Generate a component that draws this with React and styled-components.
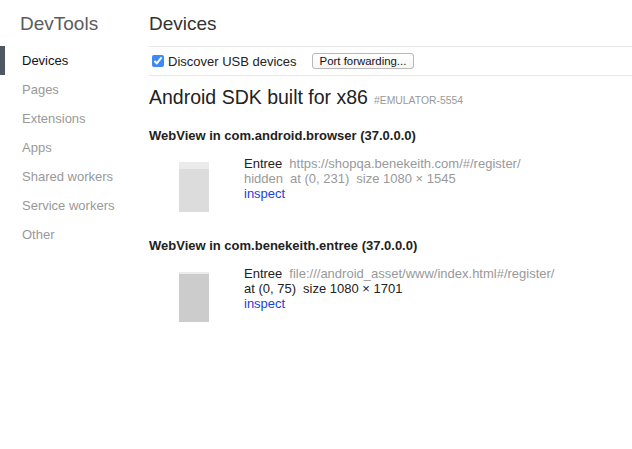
import React from "react";
import styled, { createGlobalStyle } from "styled-components";

const GlobalStyle = createGlobalStyle`
  html, body { margin: 0; padding: 0; background: #fff; }
  body {
    font-family: "Liberation Sans", Arial, Helvetica, sans-serif;
    font-size: 13px;
    color: #222;
  }
`;

const Layout = styled.div`
  display: flex;
  width: 632px;
  min-height: 449px;
`;

const Sidebar = styled.nav`
  width: 149px;
  flex-shrink: 0;
`;

const Brand = styled.h1`
  margin: 0;
  padding: 13px 0 11px 20px;
  font-size: 19px;
  line-height: 22px;
  font-weight: normal;
  color: #5c5c5c;
`;

const NavList = styled.ul`
  list-style: none;
  margin: 0;
  padding: 0;
`;

const NavItem = styled.li`
  position: relative;
  height: 29px;
  line-height: 29px;
  padding-left: 22px;
  font-size: 13px;
  color: ${(p) => (p.$active ? "#111" : "#999")};
  &::before {
    content: "";
    display: ${(p) => (p.$active ? "block" : "none")};
    position: absolute;
    left: 0;
    top: 0;
    width: 5px;
    height: 100%;
    background: #4f5763;
  }
`;

const Main = styled.main`
  flex: 1;
  min-width: 0;
`;

const PageTitle = styled.h2`
  margin: 0;
  padding: 13px 0 11px;
  font-size: 19px;
  line-height: 22px;
  font-weight: normal;
  color: #333;
  border-bottom: 1px solid #e8e8e8;
`;

const Toolbar = styled.div`
  display: flex;
  align-items: center;
  height: 28px;
  border-bottom: 1px solid #e8e8e8;
`;

const CheckLabel = styled.label`
  display: flex;
  align-items: center;
  font-size: 13px;
  line-height: 15px;
  color: #222;
`;

const Check = styled.input`
  width: 12px;
  height: 12px;
  margin: 0 4px 0 3px;
  accent-color: #3d8af7;
`;

const Button = styled.button`
  margin-left: 15px;
  height: 16px;
  padding: 0 7px;
  font-family: inherit;
  font-size: 11.4px;
  line-height: 14px;
  color: #111;
  background: linear-gradient(#fff, #f6f6f6);
  border: 1px solid #b8b8b8;
  border-radius: 3px;
`;

const DeviceHeader = styled.div`
  display: flex;
  align-items: baseline;
  margin-top: 9px;
`;

const DeviceName = styled.span`
  font-size: 19.5px;
  line-height: 24px;
  color: #222;
`;

const DeviceSerial = styled.span`
  margin-left: 6px;
  font-size: 10.4px;
  color: #999;
`;

const Section = styled.section`
  margin-top: ${(p) => (p.$first ? "19px" : "26px")};
`;

const SectionTitle = styled.h3`
  margin: 0 0 13px;
  font-size: 13px;
  line-height: 15px;
  font-weight: bold;
  color: #222;
`;

const Entry = styled.div`
  display: flex;
  align-items: flex-start;
`;

const Thumb = styled.div`
  width: 30px;
  height: 50px;
  margin: 6px 0 0 30px;
  flex-shrink: 0;
  background: ${(p) => p.$tone};
  border-top: ${(p) => p.$bar}px solid #ebebeb;
  box-sizing: border-box;
`;

const Info = styled.div`
  margin-left: 35px;
  line-height: 15px;
  font-size: 13px;
`;

const Line = styled.div`
  display: flex;
  color: ${(p) => (p.$dim ? "#999" : "#222")};
  white-space: nowrap;
`;

const Part = styled.span`
  & + & {
    margin-left: 7px;
  }
  color: ${(p) => (p.$muted ? "#999" : "inherit")};
`;

const Link = styled.a`
  color: #1a3fd6;
  text-decoration: none;
  cursor: pointer;
`;

const navItems = [
  "Devices",
  "Pages",
  "Extensions",
  "Apps",
  "Shared workers",
  "Service workers",
  "Other",
];

const webviews = [
  {
    title: "WebView in com.android.browser (37.0.0.0)",
    name: "Entree",
    url: "https://shopqa.benekeith.com/#/register/",
    hidden: true,
    position: "at (0, 231)",
    size: "size 1080 × 1545",
    bar: 7,
    tone: "#dcdcdc",
  },
  {
    title: "WebView in com.benekeith.entree (37.0.0.0)",
    name: "Entree",
    url: "file:///android_asset/www/index.html#/register/",
    hidden: false,
    position: "at (0, 75)",
    size: "size 1080 × 1701",
    bar: 2,
    tone: "#cccccc",
  },
];

export default function App() {
  return (
    <>
      <GlobalStyle />
      <Layout>
        <Sidebar>
          <Brand>DevTools</Brand>
          <NavList>
            {navItems.map((item, i) => (
              <NavItem key={item} $active={i === 0}>
                {item}
              </NavItem>
            ))}
          </NavList>
        </Sidebar>
        <Main>
          <PageTitle>Devices</PageTitle>
          <Toolbar>
            <CheckLabel>
              <Check type="checkbox" defaultChecked />
              Discover USB devices
            </CheckLabel>
            <Button type="button">Port forwarding...</Button>
          </Toolbar>
          <DeviceHeader>
            <DeviceName>Android SDK built for x86</DeviceName>
            <DeviceSerial>#EMULATOR-5554</DeviceSerial>
          </DeviceHeader>
          {webviews.map((w, i) => (
            <Section key={w.title} $first={i === 0}>
              <SectionTitle>{w.title}</SectionTitle>
              <Entry>
                <Thumb $bar={w.bar} $tone={w.tone} />
                <Info>
                  <Line>
                    <Part>{w.name}</Part>
                    <Part $muted>{w.url}</Part>
                  </Line>
                  <Line $dim={w.hidden}>
                    {w.hidden && <Part>hidden</Part>}
                    <Part>{w.position}</Part>
                    <Part>{w.size}</Part>
                  </Line>
                  <Line>
                    <Link>inspect</Link>
                  </Line>
                </Info>
              </Entry>
            </Section>
          ))}
        </Main>
      </Layout>
    </>
  );
}
